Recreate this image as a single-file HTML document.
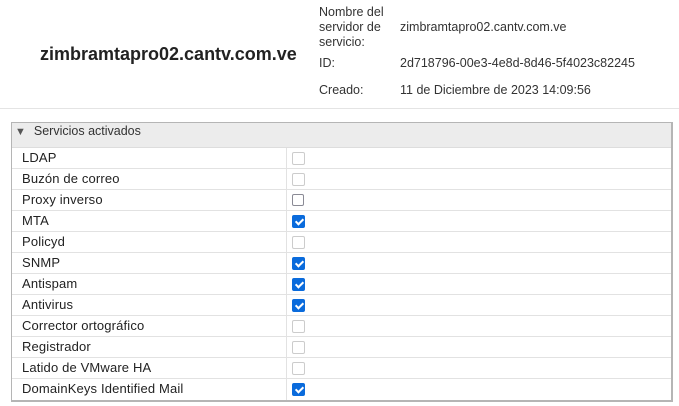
<!DOCTYPE html><html><head><style>
body{margin:0;width:679px;height:406px;background:#fff;font-family:"Liberation Sans",Arial,sans-serif;position:relative;overflow:hidden;color:#222}
.t{position:absolute;font-size:12.5px;color:#333}
.title{position:absolute;left:40px;top:44px;font-size:18px;font-weight:bold;color:#222}
.hr{position:absolute;left:0;top:108px;width:679px;height:1px;background:#e4e4e4}
.box{position:absolute;left:11px;top:122px;width:659px;height:277px;border:1px solid #b5b5b5;border-right-width:2px;border-bottom-width:2px}
.hd{height:24px;background:#ececec;border-bottom:1px solid #ddd;font-size:12.5px;line-height:17px;color:#333}
.row{height:20px;border-bottom:1px solid #e2e2e2;position:relative;font-size:13px;letter-spacing:0.15px;line-height:20px}
.row:last-child{border-bottom:none}
.row span{position:absolute;left:10px}
.row i{position:absolute;left:274px;top:0;width:1px;height:21px;background:#e2e2e2}
.cb{position:absolute;left:280px;top:4px;width:11px;height:11px;border:1px solid #ccc;border-radius:2px}
.cb.d{border:1.5px solid #8a8a95;width:10px;height:10px}
.cb.c{background:#0a6bdc;border-color:#0a6bdc}
.cb.c:after{content:"";position:absolute;left:3.5px;top:1px;width:3px;height:6px;border:solid #fff;border-width:0 2px 2px 0;transform:rotate(45deg)}
</style></head><body>
<div class="title">zimbramtapro02.cantv.com.ve</div>
<div class="t" style="left:319px;top:5px;line-height:15px">Nombre del<br>servidor de<br>servicio:</div>
<div class="t" style="left:400px;top:20px">zimbramtapro02.cantv.com.ve</div>
<div class="t" style="left:319px;top:56px">ID:</div>
<div class="t" style="left:400px;top:56px">2d718796-00e3-4e8d-8d46-5f4023c82245</div>
<div class="t" style="left:319px;top:83px">Creado:</div>
<div class="t" style="left:400px;top:83px">11 de Diciembre de 2023 14:09:56</div>
<div class="hr"></div>
<div class="box">
<div class="hd"><span style="color:#555;font-size:11px;margin-left:3px">▼</span><span style="margin-left:8px">Servicios activados</span></div>
<div class="row"><span>LDAP</span><i></i><b class="cb"></b></div>
<div class="row"><span>Buzón de correo</span><i></i><b class="cb"></b></div>
<div class="row"><span>Proxy inverso</span><i></i><b class="cb d"></b></div>
<div class="row"><span>MTA</span><i></i><b class="cb c"></b></div>
<div class="row"><span>Policyd</span><i></i><b class="cb"></b></div>
<div class="row"><span>SNMP</span><i></i><b class="cb c"></b></div>
<div class="row"><span>Antispam</span><i></i><b class="cb c"></b></div>
<div class="row"><span>Antivirus</span><i></i><b class="cb c"></b></div>
<div class="row"><span>Corrector ortográfico</span><i></i><b class="cb"></b></div>
<div class="row"><span>Registrador</span><i></i><b class="cb"></b></div>
<div class="row"><span>Latido de VMware HA</span><i></i><b class="cb"></b></div>
<div class="row"><span>DomainKeys Identified Mail</span><i></i><b class="cb c"></b></div>
</div>
</body></html>
